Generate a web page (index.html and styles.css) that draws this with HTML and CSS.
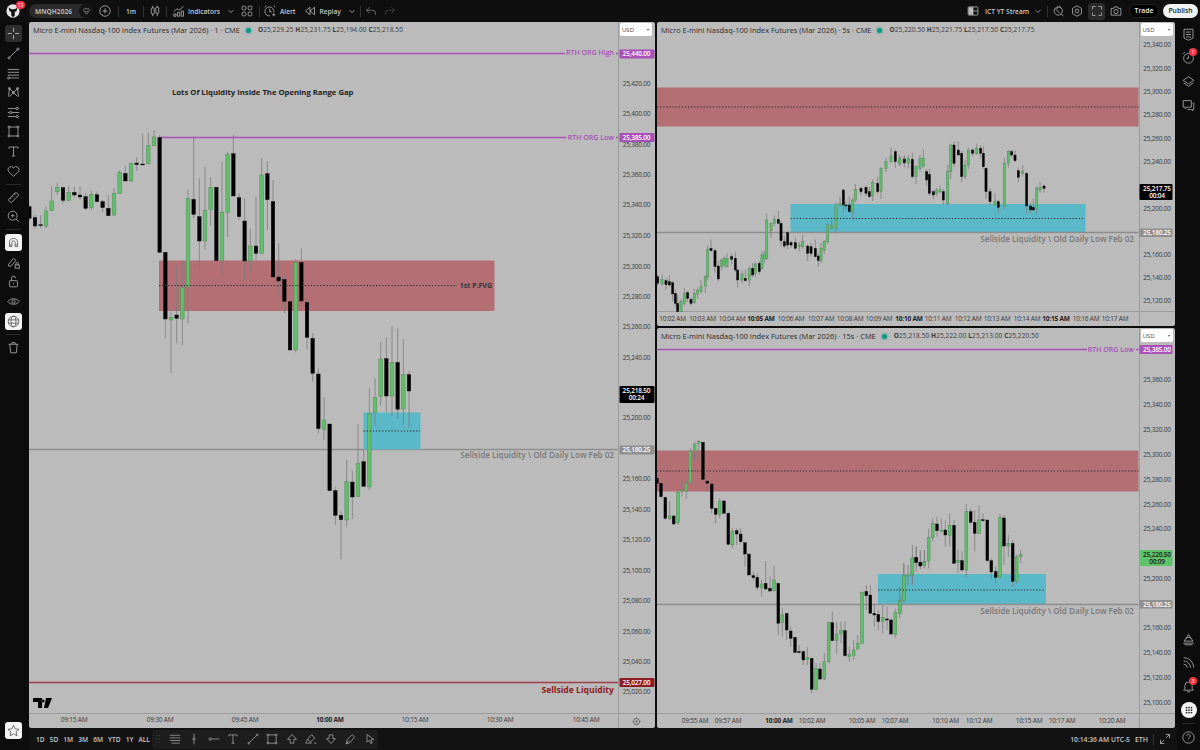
FILE: index.html
```html
<!DOCTYPE html>
<html lang="en">
<head>
    <meta charset="UTF-8">
    <meta name="viewport" content="width=device-width, initial-scale=1.0">
    <title>MNQH2026 - Multi chart layout</title>
    <link rel="stylesheet" href="styles.css">
</head>
<body>
<div class="app">

    <!-- top bar -->
    <header class="topbar">
        <div class="avatar m6">
            <svg viewBox="0 0 16 16" class="ico-full"><circle cx="8" cy="8" r="7.6" fill="#e6e6e6"/><path d="M3 4l3 2h4l3-2-1 4-2 1v4l-2 2-2-2V9L4 8z" fill="#111"/></svg>
            <span class="avatar-badge">12</span>
        </div>
        <div class="symbol-pill m9">
            <span>MNQH2026</span>
            <span class="symbol-heart"><svg viewBox="0 0 16 16" class="ico"><path d="M2.5 6l2-3h7l2 3L8 13z"/><path d="M5 7l1.5 1.5L8 7l1.5 1.5L11 7"/></svg></span>
        </div>
        <svg viewBox="0 0 16 16" class="ico m6"><circle cx="8" cy="8" r="7"/><path d="M8 4.5v7M4.5 8h7"/></svg>
        <i class="divider m7"></i>
        <span class="tb-text m7">1m</span>
        <i class="divider m7"></i>
        <svg viewBox="0 0 16 16" class="ico m5"><path d="M5 1v3M5 12v3M11 1v2M11 11v4"/><rect x="3" y="4" width="4" height="8" rx="1"/><rect x="9" y="3" width="4" height="8" rx="1"/></svg>
        <i class="divider m5"></i>
        <svg viewBox="0 0 16 16" class="ico m6"><path d="M1 9l4-4 3 2 6-5"/><path d="M1 15v-3h3v3zM6 15v-5h3v5zM11 15V8h3v7z"/></svg>
        <span class="tb-text m3">Indicators</span>
        <svg viewBox="0 0 8 8" class="chev m7"><path d="M1.5 3L4 5.5 6.5 3"/></svg>
        <svg viewBox="0 0 16 16" class="ico m6"><rect x="1.5" y="1.5" width="5" height="5" rx="1.5"/><rect x="9.5" y="1.5" width="5" height="5" rx="1.5"/><rect x="1.5" y="9.5" width="5" height="5" rx="1.5"/><rect x="9.5" y="9.5" width="5" height="5" rx="1.5"/></svg>
        <i class="divider m6"></i>
        <svg viewBox="0 0 16 16" class="ico m4"><path d="M13 10a6 6 0 1 0-5 4.5"/><path d="M7.5 5v4h3M1 3l2-2M15 3l-2-2M13 11v4M11 13h4"/></svg>
        <span class="tb-text m4">Alert</span>
        <svg viewBox="0 0 16 16" class="ico m9"><path d="M8 3L2 8l6 5zM14 3L8 8l6 5z"/></svg>
        <span class="tb-text m3">Replay</span>
        <svg viewBox="0 0 8 8" class="chev m7"><path d="M1.5 3L4 5.5 6.5 3"/></svg>
        <i class="divider m4"></i>
        <svg viewBox="0 0 16 16" class="ico ico-dim m4"><path d="M6 3L2 7l4 4M2 7h8a4 4 0 0 1 4 4v2"/></svg>
        <svg viewBox="0 0 16 16" class="ico ico-faint m7"><path d="M10 3l4 4-4 4M14 7H6a4 4 0 0 0-4 4v2"/></svg>

        <div class="topbar-right">
            <svg viewBox="0 0 16 16" class="ico"><rect x="1.5" y="2.5" width="13" height="11" rx="1"/><path d="M8 2.5v11M8 8h6.5"/><rect x="2" y="3" width="6" height="10" fill="#bdbdbd" stroke="none"/></svg>
            <span class="tb-text m6">ICT YT Stream</span>
            <svg viewBox="0 0 8 8" class="chev m5"><path d="M1.5 3L4 5.5 6.5 3"/></svg>
            <i class="divider m5"></i>
            <svg viewBox="0 0 16 16" class="ico m5"><circle cx="7" cy="8" r="5.5"/><path d="M7 2.5L4 6l5 5M11 12l3 3M9 1l1 3"/></svg>
            <svg viewBox="0 0 16 16" class="ico m6"><path d="M8 1l6 3.5v7L8 15l-6-3.5v-7z"/><circle cx="8" cy="8" r="2.5"/></svg>
            <span class="fullscreen-btn m5"><svg viewBox="0 0 16 16" class="ico"><path d="M2 6V2h4M10 2h4v4M14 10v4h-4M6 14H2v-4"/></svg></span>
            <svg viewBox="0 0 16 16" class="ico m5"><path d="M1.5 13.5v-9h3.5l1-2h4l1 2h3.5v9z"/><circle cx="8" cy="8.7" r="2.8"/></svg>
            <span class="btn-trade m7">Trade</span>
            <span class="btn-publish m4">Publish</span>
        </div>
    </header>

    <!-- drawing tools -->
    <aside class="left-tools">
        <span class="tool tool-active"><svg viewBox="0 0 16 16"><path d="M8 1v5M8 10v5M1 8h5M10 8h5"/></svg></span>
        <span class="tool"><svg viewBox="0 0 16 16"><path d="M3.5 12.5l9-9"/><circle cx="2.5" cy="13.5" r="1.3"/><circle cx="13.5" cy="2.5" r="1.3"/></svg></span>
        <span class="tool"><svg viewBox="0 0 16 16"><path d="M1 3h14M1 6.5h14M1 10h14M3.5 13.5h11"/><circle cx="2" cy="13.5" r="1.3"/></svg></span>
        <span class="tool"><svg viewBox="0 0 16 16"><path d="M3 3l5 5 5-5M3 13l5-5 5 5M3 3l-1 10M13 3l1 10"/><circle cx="3" cy="3" r="1.2"/><circle cx="13" cy="3" r="1.2"/><circle cx="8" cy="8" r="1.2"/></svg></span>
        <span class="tool"><svg viewBox="0 0 16 16"><path d="M1 3h10M14 3h1M1 8h2M6 8h9M1 13h10M14 13h1"/><circle cx="12.5" cy="3" r="1.4"/><circle cx="4.5" cy="8" r="1.4"/><circle cx="12.5" cy="13" r="1.4"/></svg></span>
        <span class="tool"><svg viewBox="0 0 16 16"><path d="M3.5 2.500h9M3.5 13.5h9M2.5 3.5v9M13.5 3.5v9"/><circle cx="2.5" cy="2.5" r="1.2"/><circle cx="13.5" cy="2.5" r="1.2"/><circle cx="2.5" cy="13.5" r="1.2"/><circle cx="13.5" cy="13.5" r="1.2"/></svg></span>
        <span class="tool"><svg viewBox="0 0 16 16"><path d="M2.5 4.5V2.5h11v2M8 2.5v11M6 13.5h4"/></svg></span>
        <span class="tool"><svg viewBox="0 0 16 16"><path d="M8 14L2 8a3.5 3.5 0 0 1 6-4.5A3.5 3.5 0 0 1 14 8z"/></svg></span>
        <i class="tool-sep"></i>
        <span class="tool"><svg viewBox="0 0 16 16"><path d="M11 1.5l3.5 3.5L5 14.5 1.5 11zM4 8.5l1.5 1.5M6.5 6l1.5 1.5M9 3.5l1.5 1.5"/></svg></span>
        <span class="tool"><svg viewBox="0 0 16 16"><circle cx="7" cy="7" r="5.5"/><path d="M11 11l3.5 3.5M5 7h4M7 5v4"/></svg></span>
        <i class="tool-sep"></i>
        <span class="tool tool-on"><svg viewBox="0 0 16 16"><path d="M3 13V8a5 5 0 0 1 10 0v5h-3V8a2 2 0 0 0-4 0v5zM3 11h3M10 11h3"/></svg></span>
        <span class="tool"><svg viewBox="0 0 16 16"><path d="M2 10l6-7 3 2.5-6 7H2z"/><rect x="10" y="11" width="5" height="4"/><path d="M11 11V9.5a1.5 1.5 0 0 1 3 0V11"/></svg></span>
        <span class="tool"><svg viewBox="0 0 16 16"><rect x="3" y="7" width="10" height="7.5" rx="1"/><path d="M5.5 7V4a2.5 2.5 0 0 1 5 0M8 10v1.5"/></svg></span>
        <span class="tool"><svg viewBox="0 0 16 16"><path d="M1 8c3-4.5 11-4.5 14 0-3 4.5-11 4.5-14 0z"/><circle cx="8" cy="8" r="2"/></svg></span>
        <span class="tool tool-on"><svg viewBox="0 0 16 16"><circle cx="8" cy="8" r="6.5"/><ellipse cx="8" cy="8" rx="3" ry="6.5"/><path d="M1.5 6h13M1.5 10h13"/></svg></span>
        <i class="tool-sep"></i>
        <span class="tool"><svg viewBox="0 0 16 16"><path d="M2 4h12M6 4V2h4v2M3.5 4l1 10.5h7l1-10.5"/></svg></span>
        <span class="tool tool-on tool-star"><svg viewBox="0 0 16 16"><path d="M8 1.5l2 4.5 4.8.5-3.6 3.2 1 4.8L8 12.1l-4.2 2.4 1-4.8L1.2 6.5 6 6z"/></svg></span>
    </aside>

    <main class="charts">
        <!-- 1m chart -->
        <section class="chart chart-tall">
            <div class="plot">
                <div class="legend">
                    <span class="legend-title">Micro E-mini Nasdaq-100 Index Futures (Mar 2026) · 1 · CME</span>
                    <i class="legend-dot"></i>
                    <span class="legend-ohlc"><b>O</b>25,229.25 <b>H</b>25,231.75 <b>L</b>25,194.00 <b>C</b>25,218.50</span>
                </div>
                <svg id="plot1m" class="plot-svg" viewBox="29 22 589 692">
                    <path class="line-purple" d="M29 53.5H565M616 53.5h2M159 137.5H566M616 137.5h2"/>
                    <path class="line-gray" d="M29 449.5H618"/>
                    <path class="line-darkred" d="M29 682.5H618"/>
                    <rect class="zone-red" x="159" y="260.5" width="335.5" height="50.5"/>
                    <rect class="zone-blue" x="363.5" y="412.5" width="57" height="37"/>
                    <g class="candles"></g>
                    <path class="line-dots" d="M159 285.5H457M363.5 431H420"/>
                    <text class="lbl lbl-purple" x="614" y="55" text-anchor="end">RTH ORG High</text>
                    <text class="lbl lbl-purple" x="614" y="140" text-anchor="end">RTH ORG Low</text>
                    <text class="lbl lbl-title" x="172" y="95">Lots Of Liquidity Inside The Opening Range Gap</text>
                    <text class="lbl lbl-dark" x="492" y="288" text-anchor="end">1st P.FVG</text>
                    <text class="lbl lbl-sell" x="614" y="458" text-anchor="end">Sellside Liquidity \ Old Daily Low Feb 02</text>
                    <text class="lbl lbl-darkred" x="614" y="693" text-anchor="end">Sellside Liquidity</text>
                    <path class="tv-logo" d="M33 698h9v10h-4v-6h-5zM46 698h6l-4 10h-4zM43 699.5a1.5 1.5 0 1 0 .01 0z"/>
                </svg>
            </div>
            <div class="price-axis">
                <svg id="axis1m" class="axis-svg" viewBox="618 22 37 692"></svg>
                <span class="usd-btn">USD <i></i></span>
            </div>
            <svg id="time1m" class="time-svg" viewBox="29 714 589 14"></svg>
            <div class="axis-corner">
                <svg viewBox="0 0 16 16" class="ico-corner"><circle cx="8" cy="8" r="5.5"/><circle cx="8" cy="8" r="1.5"/><path d="M8 1v2M8 13v2M1 8h2M13 8h2"/></svg>
            </div>
        </section>

        <!-- 5s chart -->
        <section class="chart chart-top">
            <div class="plot">
                <div class="legend">
                    <span class="legend-title">Micro E-mini Nasdaq-100 Index Futures (Mar 2026) · 5s · CME</span>
                    <i class="legend-dot"></i>
                    <span class="legend-ohlc"><b>O</b>25,220.50 <b>H</b>25,221.75 <b>L</b>25,217.50 <b>C</b>25,217.75</span>
                </div>
                <svg id="plot5s" class="plot-svg" viewBox="657 22 481.5 290">
                    <rect class="zone-red" x="657" y="87.5" width="481.5" height="39"/>
                    <rect class="zone-blue" x="790.5" y="204" width="295" height="28"/>
                    <path class="line-gray" d="M657 232.5H1138.5"/>
                    <g class="candles"></g>
                    <path class="line-dots" d="M657 107H1138.5M790.5 218.5H1085"/>
                    <text class="lbl lbl-sell" x="1134" y="242" text-anchor="end">Sellside Liquidity \ Old Daily Low Feb 02</text>
                </svg>
            </div>
            <div class="price-axis">
                <svg id="axis5s" class="axis-svg" viewBox="1138.5 22 36.5 290"></svg>
                <span class="usd-btn">USD <i></i></span>
            </div>
            <svg id="time5s" class="time-svg" viewBox="657 312 481.5 14"></svg>
            <div class="axis-corner"></div>
        </section>

        <!-- 15s chart -->
        <section class="chart chart-bottom">
            <div class="plot">
                <div class="legend">
                    <span class="legend-title">Micro E-mini Nasdaq-100 Index Futures (Mar 2026) · 15s · CME</span>
                    <i class="legend-dot"></i>
                    <span class="legend-ohlc"><b>O</b>25,218.50 <b>H</b>25,222.00 <b>L</b>25,213.00 <b>C</b>25,220.50</span>
                </div>
                <svg id="plot15s" class="plot-svg" viewBox="657 328 481.5 386">
                    <path class="line-purple" d="M657 349.5H1087M1136 349.5h2.5"/>
                    <rect class="zone-red" x="657" y="450.5" width="481.5" height="41"/>
                    <rect class="zone-blue" x="878" y="574" width="168" height="30"/>
                    <path class="line-gray" d="M657 604.5H1138.5"/>
                    <g class="candles"></g>
                    <path class="line-dots" d="M657 471H1138.5M878 590H1045"/>
                    <text class="lbl lbl-purple" x="1134" y="352" text-anchor="end">RTH ORG Low</text>
                    <text class="lbl lbl-sell" x="1134" y="614" text-anchor="end">Sellside Liquidity \ Old Daily Low Feb 02</text>
                </svg>
            </div>
            <div class="price-axis">
                <svg id="axis15s" class="axis-svg" viewBox="1138.5 328 36.5 386"></svg>
                <span class="usd-btn">USD <i></i></span>
            </div>
            <svg id="time15s" class="time-svg" viewBox="657 714 481.5 14"></svg>
            <div class="axis-corner"></div>
        </section>
    </main>

    <!-- widget bar -->
    <aside class="right-tools">
        <span class="rtool"><svg viewBox="0 0 16 16"><path d="M2.5 1.5h11v11L8 15l-5.5-2.5zM5 5h6M5 8h6M5 11h6"/></svg></span>
        <span class="rtool"><svg viewBox="0 0 16 16"><circle cx="8" cy="9" r="6"/><path d="M8 5.5V9H5.5M1.5 3.5l2-2"/></svg><em class="rbadge rbadge-top">1</em></span>
        <span class="rtool"><svg viewBox="0 0 16 16"><path d="M8 2l6.5 4.5L8 11 1.5 6.5zM2 9.5L8 14l6-4.5"/></svg></span>
        <span class="rtool"><svg viewBox="0 0 16 16"><path d="M1.5 2h10v8H6l-2 2v-2H1.5zM13 5h1.5v8H13v1.5L11.5 13H7"/></svg></span>
        <div class="rtools-bottom">
            <span class="rtool"><svg viewBox="0 0 16 16"><path d="M8 2l5.5 8h-11zM5 6.5L8 5l3 1.5M1.500 12.5h13M3 14.5h10"/></svg></span>
            <span class="rtool"><svg viewBox="0 0 16 16"><path d="M2 14.5h.1M2 10a4.5 4.5 0 0 1 4.5 4.5M2 6a8.500 8.500 0 0 1 8.5 8.5M2 2a12.500 12.500 0 0 1 12.5 12.5"/></svg></span>
            <span class="rtool"><svg viewBox="0 0 16 16"><path d="M2 12.5h12l-1.5-2V7a4.5 4.5 0 0 0-9 0v3.5zM6 14.5h4"/></svg><em class="rbadge">3</em></span>
            <span class="rtool rtool-apps"><svg viewBox="0 0 16 16"><circle cx="4" cy="4" r="1.4"/><circle cx="8" cy="4" r="1.4"/><circle cx="12" cy="4" r="1.4"/><circle cx="4" cy="8" r="1.4"/><circle cx="8" cy="8" r="1.4"/><circle cx="12" cy="8" r="1.4"/><circle cx="4" cy="12" r="1.4"/><circle cx="8" cy="12" r="1.4"/><circle cx="12" cy="12" r="1.4"/></svg></span>
            <i class="rtool-sep"></i>
            <span class="rtool"><svg viewBox="0 0 16 16"><circle cx="8" cy="8" r="7"/><path d="M5.8 6a2.2 2.2 0 1 1 3.3 2c-.7.4-1.100 1-1.100 1.800M8 11.500v.6"/></svg></span>
        </div>
    </aside>

    <!-- bottom bar -->
    <footer class="bottombar">
        <div class="ranges">
            <span>1D</span><span>5D</span><span>1M</span><span>3M</span><span>6M</span><span>YTD</span><span>1Y</span><span>ALL</span>
        </div>
        <div class="float-tools">
            <svg viewBox="0 0 6 12" class="grip"><path d="M1 2h.1M4 2h.1M1 6h.1M4 6h.1M1 10h.1M4 10h.1"/></svg>
            <svg viewBox="0 0 16 16"><path d="M1 3h14M1 6.5h14M1 10h14M3.5 13.5h11"/></svg>
            <svg viewBox="0 0 16 16"><path d="M8 1v5M8 10v5"/><circle cx="8" cy="8" r="1.6"/></svg>
            <svg viewBox="0 0 16 16"><path d="M5 8h10"/><circle cx="3" cy="8" r="1.6"/></svg>
            <svg viewBox="0 0 16 16"><path d="M2.5 4.5V2.5h11v2M8 2.5v11M6 13.5h4"/></svg>
            <svg viewBox="0 0 16 16"><path d="M3.5 12.5l9-9"/><circle cx="2.5" cy="13.5" r="1.2"/><circle cx="13.5" cy="2.5" r="1.2"/></svg>
            <svg viewBox="0 0 16 16"><path d="M3.5 2.5h9M3.5 13.5h9M2.5 3.5v9M13.5 3.5v9"/><circle cx="2.5" cy="2.5" r="1.2"/><circle cx="13.5" cy="2.5" r="1.2"/><circle cx="2.5" cy="13.5" r="1.2"/><circle cx="13.5" cy="13.5" r="1.2"/></svg>
            <svg viewBox="0 0 16 16"><path d="M8 2l6 6.5h-3.5v5h-5v-5H2z"/></svg>
            <svg viewBox="0 0 16 16"><path d="M9 2l4 5-6 5-3.5-4zM3.5 8L1 13.5h7.5L7 12M12 13.5h3"/></svg>
            <svg viewBox="0 0 16 16"><path d="M8 14l6-6.5h-3.5v-5h-5v5H2z"/></svg>
            <svg viewBox="0 0 16 16"><path d="M11 2l3 3-6 8-5 1.5L4 9zM3 14.5L7 10"/></svg>
            <svg viewBox="0 0 16 16"><path d="M4 2l9 6.5-4 .6 2 4-1.8.9-2-4L4 12z"/></svg>
        </div>
        <div class="status">
            <span class="clock">10:14:36 AM UTC-5</span>
            <span class="eth">ETH</span>
            <i class="divider"></i>
            <svg viewBox="0 0 16 16" class="ico"><path d="M9 2h5v5M14 2L9.5 6.5M7 14H2V9M2 14l4.5-4.5"/></svg>
        </div>
    </footer>
</div>

<script src="chart.js"></script>
</body>
</html>
```

FILE: styles.css
```css
* {
    box-sizing: border-box;
}

body {
    margin: 0;
    background-color: #0c0c0c;
    font-family: 'Open Sans', 'Liberation Sans', sans-serif;
    color: #c8c8c8;
    overflow: hidden;
}

.app {
    display: grid;
    grid-template-columns: 29px 1148px 23px;
    grid-template-rows: 22px 706px 22px;
    width: 1200px;
    height: 750px;
}

/* spacing helpers for the packed toolbar */
.m3 { margin-left: 3px; }
.m4 { margin-left: 4px; }
.m5 { margin-left: 5px; }
.m6 { margin-left: 6px; }
.m7 { margin-left: 7px; }
.m8 { margin-left: 8px; }
.m9 { margin-left: 9px; }

/* top bar */
.topbar {
    grid-column: 1 / 4;
    display: flex;
    align-items: center;
    background-color: #0f0f0f;
}

.avatar {
    position: relative;
    width: 14px;
    height: 14px;
    flex: none;
}

.ico-full {
    display: block;
    width: 14px;
    height: 14px;
}

.avatar-badge {
    position: absolute;
    top: -3px;
    left: 10px;
    width: 9px;
    height: 8px;
    border-radius: 4px;
    background-color: #f23645;
    color: #fff;
    font-size: 5px;
    line-height: 8px;
    text-align: center;
}

.symbol-pill {
    display: flex;
    align-items: center;
    justify-content: space-between;
    width: 64px;
    height: 14px;
    padding-left: 6px;
    border-radius: 7px;
    background-color: #2b2b2b;
    font-size: 6.6px;
    font-weight: 700;
    color: #b5b5b5;
}

.symbol-heart {
    display: flex;
    align-items: center;
    justify-content: center;
    width: 14px;
    height: 14px;
    border-radius: 50%;
    background-color: #141414;
}

.symbol-heart .ico {
    width: 9px;
    height: 9px;
}

.ico {
    flex: none;
    width: 12px;
    height: 12px;
    fill: none;
    stroke: #bdbdbd;
    stroke-width: 1;
}

.ico-dim { stroke: #8a8a8a; }
.ico-faint { stroke: #4a4a4a; }

.chev {
    flex: none;
    width: 8px;
    height: 8px;
    fill: none;
    stroke: #8f8f8f;
    stroke-width: 1;
}

.divider {
    flex: none;
    width: 1px;
    height: 11px;
    background-color: #333;
}

.tb-text {
    font-size: 6.6px;
    font-weight: 600;
    color: #c8c8c8;
    white-space: nowrap;
}

.topbar-right {
    display: flex;
    align-items: center;
    margin-left: auto;
    padding-right: 2px;
}

.fullscreen-btn {
    display: flex;
    align-items: center;
    justify-content: center;
    width: 17px;
    height: 17px;
    border-radius: 3px;
    background-color: #2b2b2b;
}

.btn-trade,
.btn-publish {
    height: 14px;
    border-radius: 7px;
    font-size: 6.8px;
    font-weight: 600;
    line-height: 14px;
    text-align: center;
}

.btn-trade {
    width: 30px;
    background-color: #000;
    border: 1px solid #222;
    line-height: 12px;
    color: #eee;
}

.btn-publish {
    width: 35px;
    background-color: #f2f2f2;
    color: #222;
}

/* left drawing tools */
.left-tools {
    grid-row: 2 / 4;
    position: relative;
    display: flex;
    flex-direction: column;
    padding-top: 2.2px;
    padding-right: 2px;
    background-color: #0c0c0c;
}

.tool {
    display: flex;
    align-items: center;
    justify-content: center;
    height: 19.6px;
    color: #b0b0b0;
}

.tool svg {
    width: 13px;
    height: 13px;
    fill: none;
    stroke: currentColor;
    stroke-width: 1;
}

.tool-active::before,
.tool-on::before {
    content: '';
    position: absolute;
    left: 5px;
    width: 17px;
    height: 17px;
    border-radius: 3px;
    background-color: #2f2f2f;
}

.tool-on::before {
    background-color: #f4f4f4;
}

.tool-active svg,
.tool-on svg {
    position: relative;
    color: #555;
}

.tool-active svg {
    color: #c4c4c4;
}

.tool-sep {
    display: block;
    flex: none;
    height: 6.4px;
    margin: 0 6px;
    background: linear-gradient(#2a2a2a, #2a2a2a) center / 100% 1px no-repeat;
}

.tool-star {
    position: absolute;
    left: 0;
    right: 2px;
    bottom: 10px;
}

/* chart area */
.charts {
    display: grid;
    grid-template-columns: 626px 518px;
    grid-template-rows: 304px 400px;
    column-gap: 2px;
    row-gap: 2px;
}

.chart {
    display: grid;
    grid-template-rows: 1fr 14px;
    background-color: #bbb;
    border-radius: 2px;
    overflow: hidden;
}

.chart-tall {
    grid-row: 1 / 3;
    grid-template-columns: 589px 37px;
}

.chart-top,
.chart-bottom {
    grid-template-columns: 481.5px 36.5px;
}

.plot {
    position: relative;
    min-height: 0;
    box-shadow: inset 0 -1px #9c9c9c;
}

.plot-svg,
.axis-svg,
.time-svg {
    display: block;
    width: 100%;
    height: 100%;
    overflow: hidden;
}

.legend {
    position: absolute;
    top: 3px;
    left: 4px;
    display: flex;
    align-items: center;
    font-size: 7.45px;
    line-height: 10px;
    white-space: nowrap;
    color: #2a2a2a;
}

.legend-dot {
    width: 5px;
    height: 5px;
    margin: 0 7px 0 6px;
    border-radius: 50%;
    background-color: #089981;
    box-shadow: 0 0 0 1.5px rgba(8, 153, 129, 0.2);
}

.legend-ohlc {
    font-size: 6.5px;
    letter-spacing: 0.1px;
    color: #3a3a3a;
}

.legend-ohlc b {
    font-weight: 700;
}

.price-axis {
    position: relative;
    min-height: 0;
    box-shadow: inset 1px 0 #9c9c9c, inset 0 -1px #9c9c9c;
}

.usd-btn {
    position: absolute;
    top: 1px;
    left: 2px;
    display: flex;
    align-items: center;
    justify-content: space-between;
    width: 32px;
    height: 13px;
    padding: 0 3px 0 2px;
    border-radius: 2px;
    background-color: #fff;
    font-size: 6px;
    color: #444;
}

.usd-btn i {
    width: 0;
    height: 0;
    border-left: 1.5px solid transparent;
    border-right: 1.5px solid transparent;
    border-top: 2px solid #555;
}

.axis-corner {
    display: flex;
    align-items: center;
    justify-content: center;
    box-shadow: inset 1px 0 #9c9c9c;
}

.ico-corner {
    width: 9px;
    height: 9px;
    fill: none;
    stroke: #333;
    stroke-width: 1;
}

/* svg marks */
.line-purple { fill: none; stroke: #a84fb8; stroke-width: 1.7; }
.line-gray { fill: none; stroke: #8e8e8e; stroke-width: 1.6; }
.line-darkred { fill: none; stroke: #9f3f4a; stroke-width: 1.7; }
.line-dots { fill: none; stroke: #2c2c2c; stroke-width: 1; stroke-dasharray: 1.3 1.8; }
.zone-red { fill: #b36f73; }
.zone-blue { fill: #5bb8c9; }
.tv-logo { fill: #000; }

.wick { stroke: #7c7c7c; stroke-width: 0.8; }
.body-up { fill: #5fbf6b; stroke: #5c8f63; stroke-width: 0.6; }
.body-down { fill: #000; stroke: #111; stroke-width: 0.4; }

.lbl {
    font-size: 7px;
    font-weight: 700;
}

.lbl-purple { fill: #a84fb8; font-weight: 600; }
.lbl-title { fill: #222; font-size: 7.7px; }
.lbl-dark { fill: #333; font-size: 7px; }
.lbl-sell { fill: #777; font-size: 8.1px; font-weight: 600; }
.lbl-darkred { fill: #8c1c22; font-size: 8.6px; }

.tick {
    font-size: 6.5px;
    letter-spacing: -0.2px;
    fill: #3a3a3a;
    text-anchor: middle;
}

.tick-bold {
    font-weight: 700;
    fill: #222;
}

.tick-white { fill: #fff; font-weight: 600; }
.tick-dark { fill: #1c1c1c; font-weight: 600; }

.box-black { fill: #000; }
.box-gray { fill: #8f8f8f; }
.box-green { fill: #5ec26a; }
.box-purple { fill: #a84fb8; }
.box-darkred { fill: #8c1c22; }

/* right widget bar */
.right-tools {
    grid-column: 3;
    grid-row: 2 / 4;
    display: flex;
    flex-direction: column;
    align-items: center;
    padding-top: 0.5px;
    background-color: #0c0c0c;
}

.rtool {
    position: relative;
    display: flex;
    align-items: center;
    justify-content: center;
    flex: none;
    width: 23px;
    height: 23.6px;
    color: #b0b0b0;
}

.rtool svg {
    width: 13px;
    height: 13px;
    fill: none;
    stroke: currentColor;
    stroke-width: 1;
}

.rbadge {
    position: absolute;
    top: 2px;
    right: 3px;
    width: 8px;
    height: 8px;
    border-radius: 50%;
    background-color: #f23645;
    color: #fff;
    font-size: 5px;
    font-style: normal;
    line-height: 8px;
    text-align: center;
}

.rtools-bottom {
    display: flex;
    flex-direction: column;
    align-items: center;
    margin-top: auto;
    padding-bottom: 0.5px;
}

.rtool-apps::before {
    content: '';
    position: absolute;
    left: 3.5px;
    top: 3.5px;
    width: 16px;
    height: 16px;
    border-radius: 50%;
    background-color: #f4f4f4;
}

.rtool-apps svg {
    position: relative;
    width: 10px;
    height: 10px;
    fill: #222;
    stroke: none;
}

.rtool-sep {
    width: 13px;
    height: 1px;
    margin: 1px 0 2px;
    background-color: #2a2a2a;
}

/* bottom bar */
.bottombar {
    grid-column: 2;
    display: flex;
    align-items: center;
    padding-left: 7px;
    background-color: #121212;
    font-size: 6.6px;
    font-weight: 600;
}

.ranges {
    display: flex;
    width: 116px;
    justify-content: space-between;
    padding-right: 2px;
}

.float-tools {
    display: flex;
    align-items: center;
    gap: 7.5px;
    width: 226px;
    height: 19px;
    padding-left: 4px;
    border-radius: 4px;
    background-color: #1d1d1d;
}

.float-tools svg {
    width: 12px;
    height: 12px;
    fill: none;
    stroke: #a8a8a8;
    stroke-width: 1;
}

.float-tools .grip {
    width: 5px;
    stroke: #555;
    stroke-linecap: round;
}

.status {
    display: flex;
    align-items: center;
    gap: 5px;
    margin-left: auto;
    padding-right: 6px;
}

.clock {
    font-size: 6.7px;
    font-weight: 600;
}

.eth {
    font-size: 7px;
}
```

FILE: chart.js
```js
// candle rows were read off the chart at 3x, so each block keeps its own origin
var NS = 'http://www.w3.org/2000/svg';

function el(parent, name, attrs, text) {
    var node = document.createElementNS(NS, name);
    for (var key in attrs) {
        node.setAttribute(key, attrs[key]);
    }
    if (text) {
        node.textContent = text;
    }
    parent.appendChild(node);
    return node;
}

// row: [x, bodyTop, bodyBottom, wickTop, wickBottom, up]
function drawCandles(svgId, originX, originY, width, rows) {
    var layer = document.querySelector('#' + svgId + ' .candles');
    rows.forEach(function (r) {
        var x = originX + r[0] / 3;
        var top = originY + r[1] / 3;
        var bottom = originY + r[2] / 3;
        el(layer, 'line', { class: 'wick', x1: x, x2: x, y1: originY + r[3] / 3, y2: originY + r[4] / 3 });
        el(layer, 'rect', {
            class: r[5] ? 'body-up' : 'body-down',
            x: x - width / 2,
            y: top,
            width: width,
            height: Math.max(bottom - top, 1)
        });
    });
}

function drawAxis(svgId, centerX, boxX, boxW, ticks, boxes) {
    var svg = document.getElementById(svgId);
    ticks.forEach(function (t) {
        el(svg, 'text', { class: 'tick', x: centerX, y: t[0] + 2 }, t[1]);
    });
    boxes.forEach(function (b) {
        el(svg, 'rect', { class: 'box-' + b.color, x: boxX, y: b.y, width: boxW, height: b.h, rx: 1 });
        el(svg, 'text', { class: 'tick ' + (b.dark ? 'tick-dark' : 'tick-white'), x: centerX, y: b.y + 6.5 }, b.text);
        if (b.sub) {
            el(svg, 'text', { class: 'tick ' + (b.dark ? 'tick-dark' : 'tick-white'), x: centerX, y: b.y + 13.5 }, b.sub);
        }
    });
}

function drawTimes(svgId, y, labels) {
    var svg = document.getElementById(svgId);
    labels.forEach(function (l) {
        el(svg, 'text', { class: 'tick' + (l[2] ? ' tick-bold' : ''), x: l[0], y: y }, l[1]);
    });
}

/* ---- 1m chart ---- */
drawCandles('plot1m', 20, 125, 3.6, [
    [28, 245, 280, 240, 285, 0], [45, 278, 303, 270, 310, 0], [62, 299, 301, 270, 310, 0],
    [78, 258, 303, 245, 310, 1], [95, 228, 257, 183, 257, 1], [112, 187, 200, 172, 210, 1],
    [129, 188, 226, 185, 235, 0], [146, 203, 226, 185, 226, 1], [163, 202, 210, 185, 218, 0],
    [180, 210, 216, 185, 225, 0], [197, 215, 250, 205, 255, 0], [214, 209, 248, 197, 255, 1],
    [231, 209, 230, 200, 232, 0], [248, 230, 248, 225, 262, 0], [265, 250, 272, 210, 272, 0],
    [282, 205, 270, 188, 272, 1], [299, 142, 205, 135, 205, 1], [316, 145, 168, 122, 168, 0],
    [333, 115, 168, 112, 170, 1], [350, 114, 119, 97, 137, 0]
]);
drawCandles('plot1m', 140, 125, 3.6, [
    [8, 117, 119, 25, 119, 0], [25, 62, 116, 22, 118, 1], [42, 36, 62, 15, 62, 1],
    [59, 38, 382, 30, 382, 0], [76, 382, 582, 382, 640, 0], [93, 577, 585, 560, 745, 1],
    [110, 570, 580, 420, 655, 0], [127, 488, 582, 405, 660, 1], [144, 221, 486, 195, 595, 1],
    [161, 223, 268, 35, 280, 0], [178, 275, 348, 160, 430, 0], [195, 257, 348, 125, 375, 1],
    [212, 188, 254, 157, 303, 1], [229, 187, 407, 185, 407, 0], [246, 262, 407, 110, 448, 1],
    [263, 88, 262, 80, 335, 1], [280, 86, 213, 30, 213, 0], [297, 218, 275, 205, 285, 0],
    [314, 288, 408, 220, 465, 0], [331, 363, 408, 310, 440, 1], [348, 363, 385, 215, 405, 0],
    [365, 150, 385, 98, 385, 1], [382, 146, 224, 108, 315, 0], [399, 230, 456, 165, 456, 0],
    [416, 456, 468, 355, 512, 0], [433, 463, 529, 450, 565, 0], [450, 530, 675, 530, 675, 0],
    [467, 412, 675, 402, 682, 1], [484, 412, 528, 370, 545, 0], [501, 532, 637, 518, 672, 0]
]);
drawCandles('plot1m', 300, 320, 3.6, [
    [38, 55, 160, 40, 185, 0], [55, 162, 326, 145, 340, 0], [72, 300, 328, 232, 360, 1],
    [89, 312, 512, 312, 512, 0], [106, 512, 586, 500, 614, 0], [123, 586, 599, 575, 718, 0],
    [140, 485, 600, 420, 620, 1], [157, 486, 531, 452, 597, 0], [174, 431, 530, 312, 530, 1],
    [191, 425, 499, 388, 499, 0], [208, 280, 501, 205, 510, 1], [225, 232, 278, 175, 318, 1],
    [242, 117, 229, 65, 258, 1], [259, 116, 228, 52, 278, 0], [276, 128, 228, 20, 288, 1],
    [293, 127, 268, 25, 297, 0], [310, 164, 267, 57, 315, 1], [327, 164, 213, 152, 323, 0]
]);
drawAxis('axis1m', 636.5, 619.5, 35, [
    [84, '25,420.00'], [114, '25,400.00'], [145, '25,380.00'], [175, '25,360.00'], [205, '25,340.00'],
    [236, '25,320.00'], [267, '25,300.00'], [297, '25,280.00'], [327, '25,260.00'], [358, '25,240.00'],
    [418, '25,200.00'], [479, '25,160.00'], [510, '25,140.00'], [540, '25,120.00'], [571, '25,100.00'],
    [601, '25,080.00'], [632, '25,060.00'], [662, '25,040.00'], [692, '25,020.00']
], [
    { y: 49.5, h: 9, text: '25,440.00', color: 'purple' },
    { y: 133, h: 9, text: '25,385.00', color: 'purple' },
    { y: 386, h: 17, text: '25,218.50', sub: '00:24', color: 'black' },
    { y: 445.5, h: 9, text: '25,180.25', color: 'gray' },
    { y: 678, h: 9, text: '25,027.00', color: 'darkred' }
]);
drawTimes('time1m', 722, [
    [74, '09:15 AM'], [160, '09:30 AM'], [245, '09:45 AM'], [330, '10:00 AM', 1],
    [415, '10:15 AM'], [500, '10:30 AM'], [586, '10:45 AM']
]);

/* ---- 5s chart: bodies only were traced, wicks come from a short repeating pattern ---- */
var wickUp = [6, 14, 9, 20, 4, 11, 26, 7, 16, 5];
var wickDown = [8, 4, 15, 6, 22, 10, 3, 18, 7, 12];

function withWicks(rows) {
    return rows.map(function (r, i) {
        return [r[0], r[1], r[2], r[1] - wickUp[i % 10], r[2] + wickDown[i % 10], r[3]];
    });
}

drawCandles('plot5s', 656, 130, 2.2, withWicks([
    [5, 440, 460, 0], [18, 448, 462, 1], [30, 452, 464, 0], [40, 455, 465, 0], [50, 458, 492, 0],
    [58, 490, 520, 0], [65, 520, 545, 0], [75, 515, 545, 1], [85, 490, 520, 1], [95, 488, 505, 0],
    [105, 508, 520, 0], [115, 490, 518, 1], [125, 482, 492, 1], [135, 470, 485, 1], [148, 440, 468, 1],
    [155, 358, 440, 1], [165, 355, 362, 0], [177, 362, 410, 0], [187, 408, 447, 0], [197, 390, 410, 1],
    [205, 385, 405, 1], [213, 385, 410, 1], [227, 380, 388, 0], [238, 385, 420, 0], [245, 420, 450, 0],
    [258, 432, 450, 1], [268, 445, 452, 0], [280, 415, 450, 1], [290, 415, 435, 0], [298, 402, 430, 1],
    [310, 400, 425, 0], [318, 375, 415, 1], [325, 372, 385, 1], [332, 270, 385, 1], [345, 280, 302, 1],
    [355, 268, 280, 1], [367, 268, 280, 0], [375, 280, 332, 0], [385, 335, 348, 0], [395, 308, 345, 0],
    [405, 338, 345, 0], [418, 338, 355, 0], [430, 345, 350, 1], [440, 335, 350, 1], [455, 348, 370, 0],
    [465, 350, 370, 0], [478, 355, 380, 0], [487, 378, 392, 0], [495, 355, 392, 1], [505, 335, 360, 1],
    [515, 285, 335, 1], [527, 285, 295, 1], [540, 225, 295, 1], [552, 220, 225, 1], [562, 180, 225, 0],
    [570, 225, 228, 0], [580, 225, 245, 0], [590, 210, 245, 1], [598, 178, 210, 1], [615, 175, 185, 0],
    [630, 172, 190, 0], [640, 185, 200, 0], [650, 158, 198, 1], [665, 160, 185, 0], [675, 115, 185, 1],
    [690, 95, 115, 1], [705, 78, 95, 1], [718, 65, 95, 0], [730, 90, 100, 1], [745, 85, 100, 1]
]));
drawCandles('plot5s', 900, 130, 2.2, withWicks([
    [0, 85, 100, 1], [13, 88, 98, 0], [25, 85, 100, 1], [37, 88, 140, 0], [48, 110, 140, 1],
    [60, 85, 115, 1], [70, 85, 110, 1], [80, 125, 150, 0], [88, 133, 190, 0], [100, 185, 195, 0],
    [110, 180, 190, 1], [120, 180, 185, 1], [130, 185, 210, 0], [143, 125, 220, 1], [152, 45, 125, 1],
    [162, 45, 100, 0], [175, 60, 75, 0], [185, 70, 140, 0], [195, 105, 140, 1], [205, 60, 105, 1],
    [218, 60, 70, 0], [230, 55, 70, 1], [242, 55, 70, 0], [250, 70, 110, 0], [258, 115, 185, 0],
    [270, 185, 215, 0], [285, 215, 225, 1], [295, 215, 232, 0], [313, 100, 230, 1], [325, 65, 100, 1],
    [335, 65, 75, 0], [345, 75, 92, 0], [355, 122, 142, 0], [368, 125, 130, 1], [380, 130, 228, 0],
    [392, 228, 240, 0], [400, 232, 240, 0], [410, 175, 235, 1], [420, 172, 180, 1], [432, 168, 175, 0]
]));
drawAxis('axis5s', 1156.5, 1139, 33, [
    [45, '25,340.00'], [69, '25,320.00'], [92, '25,300.00'], [115, '25,280.00'], [139, '25,260.00'],
    [162, '25,240.00'], [208.5, '25,200.00'], [255, '25,160.00'], [278, '25,140.00'], [301, '25,120.00']
], [
    { y: 184, h: 16, text: '25,217.75', sub: '00:04', color: 'black' },
    { y: 228.5, h: 8.5, text: '25,180.25', color: 'gray' }
]);
drawTimes('time5s', 321, [
    [672.5, '10:02 AM'], [702.5, '10:03 AM'], [732, '10:04 AM'], [761, '10:05 AM', 1], [791, '10:06 AM'],
    [821, '10:07 AM'], [850, '10:08 AM'], [879, '10:09 AM'], [909, '10:10 AM', 1], [938, '10:11 AM'],
    [968, '10:12 AM'], [997, '10:13 AM'], [1027, '10:14 AM'], [1056, '10:15 AM', 1], [1086, '10:16 AM'],
    [1115, '10:17 AM']
]);

/* ---- 15s chart ---- */
drawCandles('plot15s', 656, 430, 2.8, [
    [3, 145, 160, 140, 175, 0], [15, 160, 200, 155, 205, 0], [28, 202, 265, 202, 270, 0],
    [41, 258, 265, 215, 270, 1], [53, 258, 282, 255, 285, 0], [66, 187, 278, 175, 285, 1],
    [78, 180, 183, 150, 200, 1], [91, 160, 185, 150, 207, 1], [103, 63, 158, 55, 160, 1],
    [116, 42, 65, 35, 95, 1], [128, 35, 40, 30, 85, 1], [141, 37, 148, 35, 150, 0],
    [154, 153, 160, 145, 185, 0], [167, 162, 235, 155, 250, 0], [179, 235, 253, 235, 280, 0],
    [191, 214, 253, 205, 265, 1], [204, 213, 250, 210, 250, 0], [217, 250, 343, 245, 345, 0],
    [229, 305, 345, 295, 355, 1], [242, 302, 312, 295, 345, 0], [254, 312, 335, 295, 340, 0],
    [267, 338, 372, 338, 410, 0], [279, 372, 435, 372, 435, 0], [292, 437, 443, 425, 450, 0],
    [304, 442, 472, 430, 480, 0], [317, 462, 472, 450, 500, 1], [329, 460, 477, 393, 480, 0],
    [342, 475, 483, 440, 485, 0], [354, 450, 482, 408, 485, 1], [367, 460, 580, 460, 615, 0],
    [379, 555, 577, 535, 620, 1], [392, 550, 600, 550, 630, 0], [404, 603, 625, 590, 650, 0],
    [417, 622, 667, 620, 670, 0], [429, 665, 667, 645, 670, 0], [442, 665, 690, 660, 705, 0],
    [454, 683, 688, 652, 705, 1], [467, 685, 778, 685, 790, 0], [480, 715, 778, 700, 780, 1],
    [492, 717, 747, 700, 750, 0], [505, 695, 747, 670, 750, 1], [518, 577, 695, 575, 700, 1],
    [529, 578, 632, 545, 632, 0], [542, 612, 632, 575, 672, 1], [555, 602, 610, 575, 640, 1],
    [567, 602, 677, 575, 680, 0], [580, 673, 680, 650, 695, 1], [593, 660, 677, 630, 690, 1],
    [605, 640, 657, 615, 660, 1], [618, 487, 640, 485, 640, 1], [631, 484, 497, 465, 540, 0],
    [643, 495, 550, 465, 550, 0], [655, 550, 555, 525, 590, 0], [667, 553, 575, 540, 600, 0],
    [680, 563, 575, 525, 610, 1], [693, 567, 570, 530, 600, 0], [705, 570, 612, 565, 615, 0],
    [718, 548, 614, 535, 622, 1], [731, 512, 550, 470, 565, 1], [743, 437, 512, 400, 515, 1],
    [769, 385, 435, 375, 465, 1], [780, 383, 397, 350, 410, 0], [793, 397, 407, 360, 418, 0],
    [805, 395, 405, 360, 415, 1]
]);
drawCandles('plot15s', 900, 490, 2.8, [
    [86, 142, 213, 115, 235, 1], [98, 100, 142, 85, 155, 1], [111, 102, 122, 80, 140, 0],
    [124, 121, 123, 85, 125, 1], [136, 120, 135, 92, 170, 0], [149, 106, 137, 70, 170, 1],
    [162, 106, 220, 90, 220, 0], [174, 212, 218, 180, 250, 1], [186, 212, 240, 185, 245, 0],
    [199, 64, 240, 42, 260, 1], [212, 65, 97, 55, 100, 0], [224, 97, 130, 60, 185, 0],
    [237, 90, 130, 45, 132, 1], [249, 89, 91, 70, 95, 0], [262, 90, 212, 90, 215, 0],
    [274, 212, 246, 205, 268, 0], [287, 244, 262, 230, 280, 0], [300, 83, 262, 72, 265, 1],
    [312, 84, 168, 75, 225, 0], [325, 160, 168, 135, 200, 1], [338, 160, 274, 150, 290, 0],
    [350, 200, 274, 195, 280, 1], [362, 193, 200, 180, 220, 1],
    [0, 335, 370, 320, 372, 1], [12, 258, 332, 220, 335, 1], [24, 255, 258, 225, 285, 1],
    [37, 205, 255, 165, 285, 1], [49, 203, 217, 170, 245, 0], [61, 217, 228, 185, 235, 0],
    [73, 217, 227, 180, 235, 1]
]);
drawAxis('axis15s', 1156.5, 1139, 33, [
    [380, '25,360.00'], [405, '25,340.00'], [430, '25,320.00'], [455, '25,300.00'], [480, '25,280.00'],
    [504.5, '25,260.00'], [529, '25,240.00'], [579, '25,200.00'], [628, '25,160.00'], [653, '25,140.00'],
    [678, '25,120.00'], [703, '25,100.00']
], [
    { y: 345, h: 9, text: '25,385.00', color: 'purple' },
    { y: 550, h: 16, text: '25,220.50', sub: '00:09', color: 'green', dark: 1 },
    { y: 600, h: 8.5, text: '25,180.25', color: 'gray' }
]);
drawTimes('time15s', 723, [
    [695, '09:55 AM'], [728, '09:57 AM'], [779, '10:00 AM', 1], [812, '10:02 AM'], [862, '10:05 AM'],
    [895, '10:07 AM'], [945.5, '10:10 AM'], [979, '10:12 AM'], [1029, '10:15 AM'], [1062, '10:17 AM'],
    [1112, '10:20 AM']
]);
```
